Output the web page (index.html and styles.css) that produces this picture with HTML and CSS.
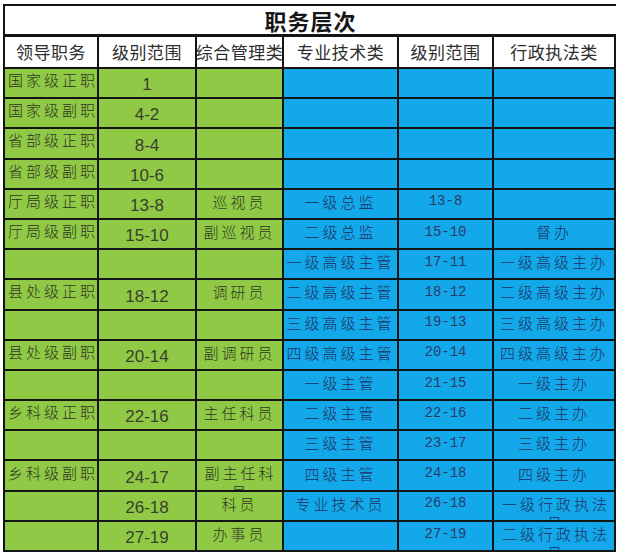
FILE: index.html
```html
<!DOCTYPE html>
<html lang="zh">
<head>
<meta charset="utf-8">
<link rel="stylesheet" href="styles.css">
</head>
<body>
<div class="sheet">
  <div class="title">职务层次</div>
  <div class="hd">领导职务</div>
  <div class="hd">级别范围</div>
  <div class="hd nowrap">综合管理类</div>
  <div class="hd">专业技术类</div>
  <div class="hd">级别范围</div>
  <div class="hd">行政执法类</div>

  <div class="g c1">国家级正职</div><div class="g num">1</div><div class="g c3"></div><div class="b"></div><div class="b"></div><div class="b"></div>
  <div class="g c1">国家级副职</div><div class="g num">4-2</div><div class="g c3"></div><div class="b"></div><div class="b"></div><div class="b"></div>
  <div class="g c1">省部级正职</div><div class="g num">8-4</div><div class="g c3"></div><div class="b"></div><div class="b"></div><div class="b"></div>
  <div class="g c1">省部级副职</div><div class="g num">10-6</div><div class="g c3"></div><div class="b"></div><div class="b"></div><div class="b"></div>
  <div class="g c1">厅局级正职</div><div class="g num">13-8</div><div class="g c3">巡视员</div><div class="b">一级总监</div><div class="b bn">13-8</div><div class="b"></div>
  <div class="g c1">厅局级副职</div><div class="g num">15-10</div><div class="g c3">副巡视员</div><div class="b">二级总监</div><div class="b bn">15-10</div><div class="b">督办</div>
  <div class="g c1"></div><div class="g num"></div><div class="g c3"></div><div class="b">一级高级主管</div><div class="b bn">17-11</div><div class="b">一级高级主办</div>
  <div class="g c1">县处级正职</div><div class="g num">18-12</div><div class="g c3">调研员</div><div class="b">二级高级主管</div><div class="b bn">18-12</div><div class="b">二级高级主办</div>
  <div class="g c1"></div><div class="g num"></div><div class="g c3"></div><div class="b">三级高级主管</div><div class="b bn">19-13</div><div class="b">三级高级主办</div>
  <div class="g c1">县处级副职</div><div class="g num">20-14</div><div class="g c3">副调研员</div><div class="b">四级高级主管</div><div class="b bn">20-14</div><div class="b">四级高级主办</div>
  <div class="g c1"></div><div class="g num"></div><div class="g c3"></div><div class="b">一级主管</div><div class="b bn">21-15</div><div class="b">一级主办</div>
  <div class="g c1">乡科级正职</div><div class="g num">22-16</div><div class="g c3">主任科员</div><div class="b">二级主管</div><div class="b bn">22-16</div><div class="b">二级主办</div>
  <div class="g c1"></div><div class="g num"></div><div class="g c3"></div><div class="b">三级主管</div><div class="b bn">23-17</div><div class="b">三级主办</div>
  <div class="g c1">乡科级副职</div><div class="g num">24-17</div><div class="g c3 wrap"><span>副主任科员</span></div><div class="b">四级主管</div><div class="b bn">24-18</div><div class="b">四级主办</div>
  <div class="g c1"></div><div class="g num">26-18</div><div class="g c3">科员</div><div class="b">专业技术员</div><div class="b bn">26-18</div><div class="b wrap"><span>一级行政执法员</span></div>
  <div class="g c1"></div><div class="g num">27-19</div><div class="g c3">办事员</div><div class="b"></div><div class="b bn">27-19</div><div class="b wrap"><span>二级行政执法员</span></div>
</div>
</body>
</html>
```

FILE: styles.css
```css
html, body {
  margin: 0;
  padding: 0;
  background: #ffffff;
}

body {
  padding: 4px 0 0 3px;
  font-family: "Noto Sans CJK SC", "Noto Sans", sans-serif;
}

.sheet {
  width: 613px;
  display: grid;
  grid-template-columns: 92px 96px 85px 113px 93px 120px;
  grid-template-rows: 29px 30px repeat(16, 28.2px);
  column-gap: 2px;
  row-gap: 2px;
  padding: 2px;
  box-sizing: border-box;
  background: #141414;
}

.sheet > div {
  overflow: hidden;
  display: flex;
  align-items: center;
  justify-content: center;
  min-width: 0;
}

.title {
  grid-column: 1 / -1;
  background: #ffffff;
  font-size: 22px;
  line-height: 1;
  font-weight: 700;
  color: #161616;
  letter-spacing: 1px;
  margin-right: -2px;
  margin-bottom: 1px;
}

.hd {
  background: #ffffff;
  font-size: 17px;
  line-height: 1.2;
  color: #2e2e2e;
  white-space: nowrap;
  letter-spacing: 0.5px;
}

.g {
  background: #8fc946;
  color: #30351f;
}

.b {
  background: #12a8ea;
  color: #1f3060;
  font-size: 15px;
  line-height: 1.2;
  font-weight: 300;
  letter-spacing: 3px;
  padding-bottom: 4px;
  box-sizing: border-box;
}

.c1 {
  justify-content: flex-start !important;
  padding-left: 3px;
  padding-bottom: 6px;
  box-sizing: border-box;
  font-size: 15px;
  line-height: 1.2;
  font-weight: 300;
  letter-spacing: 3px;
  white-space: nowrap;
}

.num {
  font-family: "Liberation Sans", Arial, sans-serif;
  font-size: 17px;
  line-height: 1.1;
  color: #3a3f2c;
  padding-top: 5px;
  box-sizing: border-box;
}

.c3 {
  font-size: 15px;
  line-height: 1.2;
  font-weight: 300;
  letter-spacing: 3px;
  padding-bottom: 4px;
  box-sizing: border-box;
}

.bn {
  font-family: "Liberation Mono", "DejaVu Sans Mono", monospace;
  font-size: 14px;
  color: #2a3b6a;
  letter-spacing: 0;
}

.wrap {
  align-items: flex-start !important;
  padding-bottom: 0;
}

.wrap span {
  display: block;
  text-align: center;
  line-height: 19px;
  padding: 2px 4px 0 6px;
}

.b.wrap span {
  padding: 2px 4px 0 8px;
}
```
